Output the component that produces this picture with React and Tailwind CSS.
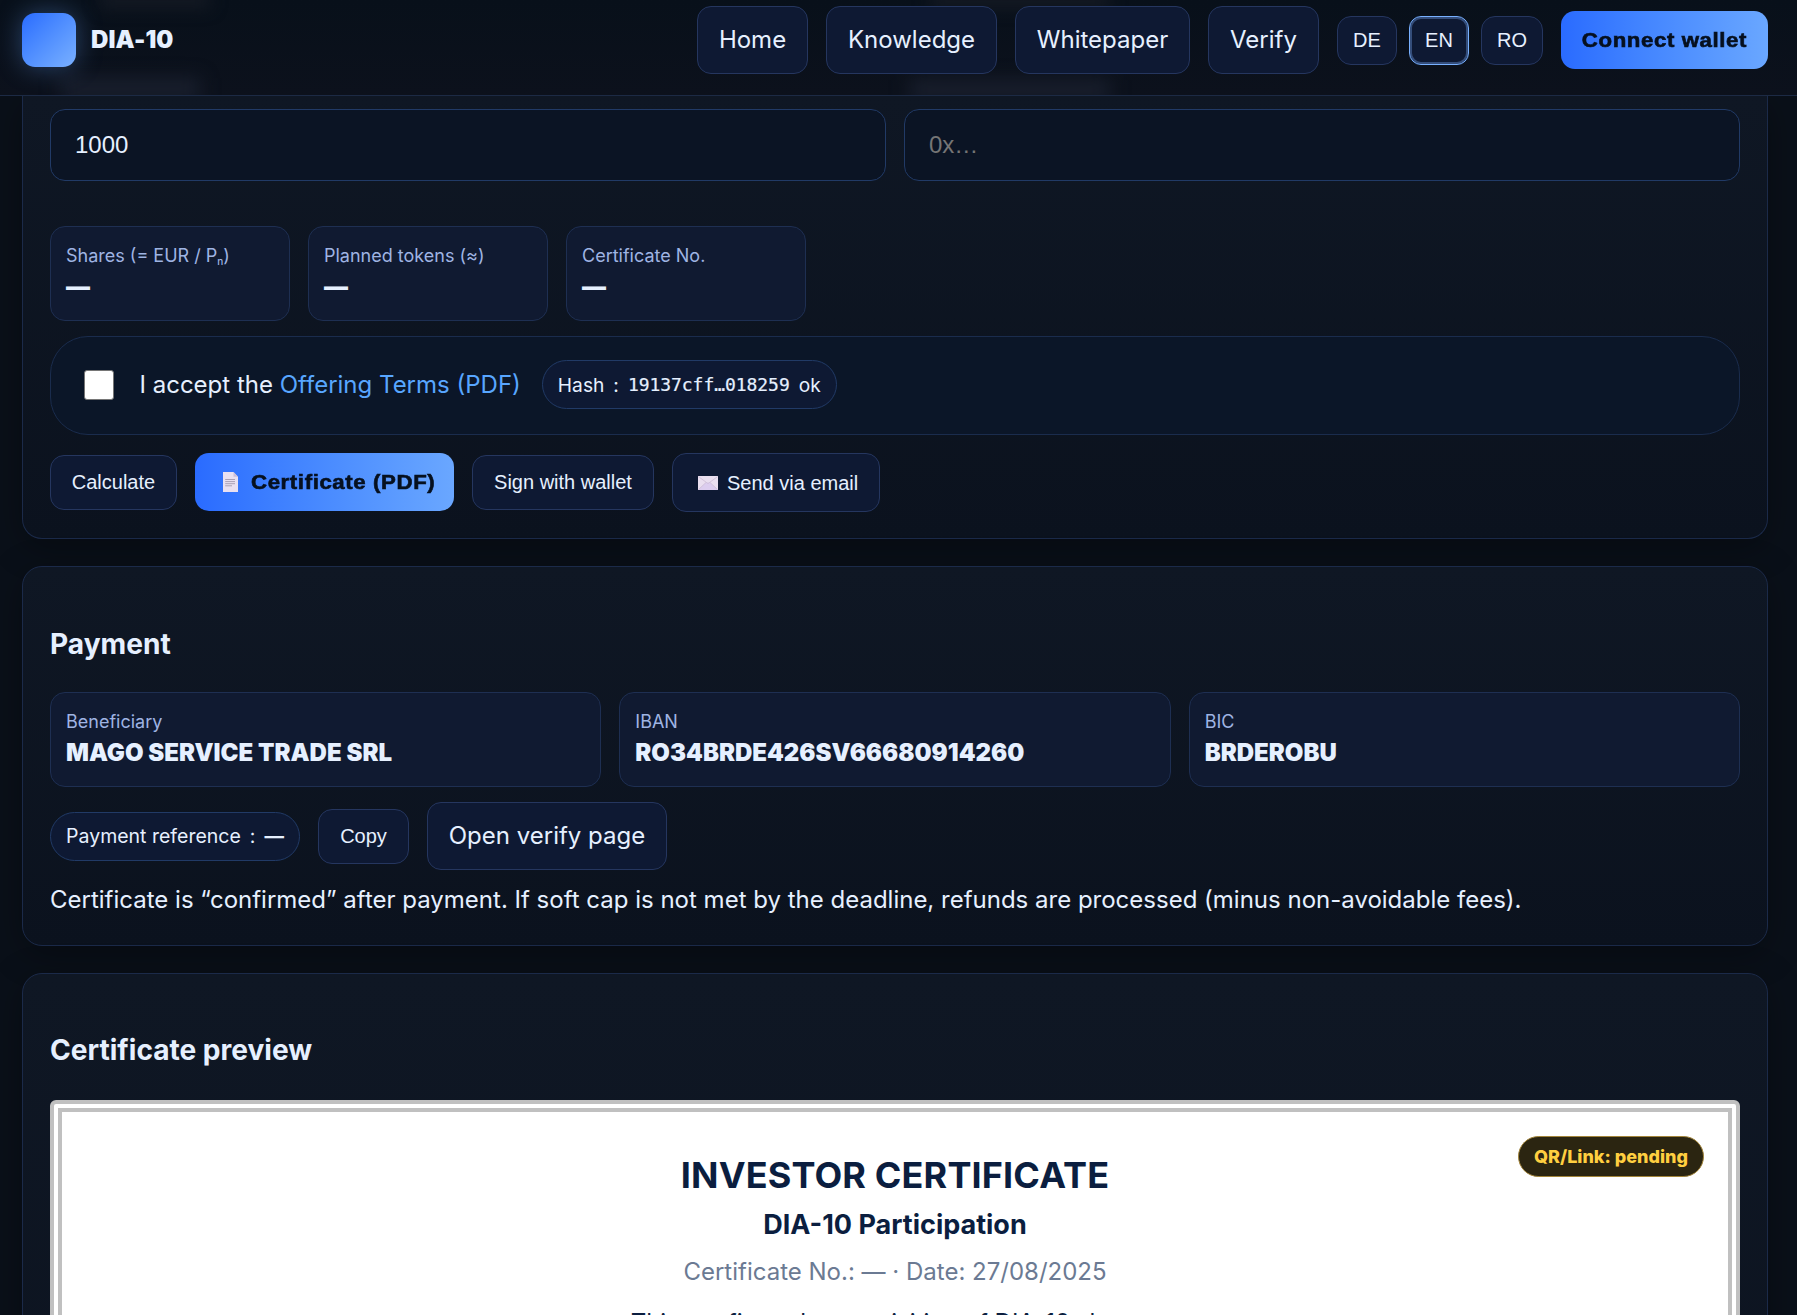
const btn = "flex items-center border border-[#25365f] bg-[#0e1933] rounded-[14px]";
const sans = "font-['Inter',sans-serif]";
const arial = "font-['Liberation_Sans',sans-serif]";
const heavy = "font-bold tracking-[0.55px] text-[#06101f] [-webkit-text-stroke:0.6px_#06101f]";

function Tile({ label, value, wide }) {
  return (
    <div className={`${wide ? "flex-1" : "w-[240px]"} h-[95px] rounded-[15px] border border-[#1e2f52] bg-[#101a31] px-[15px] pt-[15px]`}>
      <div className="h-7 text-[18px] leading-[28px] text-[#9fb4e3]">{label}</div>
      <div className="text-[24px] leading-[34px] font-black">{value}</div>
    </div>
  );
}

function DocIcon() {
  return (
    <svg viewBox="0 0 15 20" className="h-5 w-[15px] shrink-0">
      <path d="M0 0H10.5L15 4.8V20H0Z" fill="#e9e0f1" />
      <path d="M10.5 0V4.8H15Z" fill="#cbbfd8" />
      <path d="M2.2 7.5H12M2.2 9.6H12M2.2 11.7H12M2.2 13.8H9" stroke="#aaa1b6" strokeWidth="1" />
    </svg>
  );
}

function MailIcon() {
  return (
    <svg viewBox="0 0 20 14" className="h-[14px] w-5 shrink-0">
      <rect width="20" height="14" fill="#eadff0" />
      <path d="M0 14L8 6.5H12L20 14Z" fill="#dccdef" />
      <path d="M0.3 0.5L10 7.6L19.7 0.5M0.5 13.5L8 6.5M19.5 13.5L12 6.5" fill="none" stroke="#cdbdd6" strokeWidth="0.8" />
    </svg>
  );
}

const card = "mx-[22px] w-[1746px] border border-[#1b2a49] bg-linear-to-b from-[#0f1724] to-[#0b121e] px-[27px] shadow-[0_8px_36px_rgba(0,0,0,0.3)]";

export default function App() {
  return (
    <div className={`${sans} h-[1315px] w-full overflow-hidden bg-[#0a1019] text-[24px] leading-[36px] text-[#e6f0ff]`}>
      <header className="relative flex h-24 items-start overflow-hidden border-b border-[#1c2a44] bg-linear-to-b from-[#08101a] to-[#0c111c] pr-[29px] pl-[22px]">
        <div className="pointer-events-none absolute -top-2 left-[100px] h-4 w-[110px] bg-[#151a24] blur-[8px]" />
        <div className="pointer-events-none absolute -top-2 left-[930px] h-4 w-[180px] bg-[#151a24] blur-[8px]" />
        <div className="pointer-events-none absolute top-[78px] left-[60px] h-[22px] w-[140px] bg-[#191f2d] blur-[9px]" />
        <div className="pointer-events-none absolute top-[80px] left-[910px] h-5 w-[200px] bg-[#191f2d] blur-[9px]" />
        <div className="relative mt-[13px] size-[54px] rounded-[13px] bg-linear-to-br from-[#2a6bff] to-[#7ab0ff] shadow-[0_0_26px_rgba(106,167,255,0.35)]" />
        <div className="relative mt-[22px] ml-[15px] text-[24px] leading-[36px] font-black tracking-[0.1px]">DIA-10</div>
        <nav className="relative ml-auto flex h-20 items-center gap-[18px]">
          <div className={`${btn} h-[68px] w-[111px] justify-center`}>Home</div>
          <div className={`${btn} h-[68px] w-[171px] justify-center`}>Knowledge</div>
          <div className={`${btn} h-[68px] w-[175px] justify-center`}>Whitepaper</div>
          <div className={`${btn} h-[68px] w-[111px] justify-center`}>Verify</div>
          <div className={`${arial} flex gap-3 text-[20px]`}>
            <div className={`${btn} h-[49px] w-[60px] justify-center rounded-[12px]`}>DE</div>
            <div className="flex h-[49px] w-[60px] items-center justify-center rounded-[12px] border border-[#78b0ff] bg-[#0e1933] shadow-[inset_0_0_0_2px_rgba(122,176,255,0.35)]">EN</div>
            <div className={`${btn} h-[49px] w-[62px] justify-center rounded-[12px]`}>RO</div>
          </div>
          <div className={`${arial} ${heavy} flex h-[58px] w-[207px] items-center justify-center rounded-[14px] bg-linear-to-r from-[#2a6bff] to-[#6aa7ff] text-[20px] whitespace-nowrap`}>
            <span className="scale-x-[1.11]">Connect wallet</span>
          </div>
        </nav>
      </header>

      <section className={`${card} h-[443px] rounded-b-[20px] border-t-0 from-[#0e1421]`}>
        <div className={`${arial} flex gap-[18px] pt-[13px]`}>
          <div className="flex h-[72px] flex-1 items-center rounded-[15px] border border-[#213a66] bg-[#0b1424] px-6">1000</div>
          <div className="flex h-[72px] flex-1 items-center rounded-[15px] border border-[#213a66] bg-[#0b1424] px-6 text-[#757575]">0x…</div>
        </div>
        <div className="mt-[45px] flex gap-[18px]">
          <Tile label={<>Shares (= EUR / P<span className="relative top-[3px] text-[10px] leading-none font-medium">n</span>)</>} value="—" />
          <Tile label="Planned tokens (≈)" value="—" />
          <Tile label="Certificate No." value="—" />
        </div>
        <div className="mt-[15px] flex h-[99px] items-center rounded-[38px] border border-[#1a2c4d] bg-[#0b1628] pb-[2px] pl-[33px]">
          <div className="size-[30px] rounded-[3px] border-[1.5px] border-[#767676] bg-white" />
          <div className="ml-[25.5px]">I accept the <span className="text-[#58a6ff]">Offering Terms (PDF)</span></div>
          <div className="ml-[21px] flex h-[49px] w-[295px] items-center justify-center gap-[9px] rounded-full border border-[#213a66] bg-[#0e1933] text-[19.2px]">
            <span>Hash</span><span>:</span><span className="font-['DejaVu_Sans_Mono',monospace] text-[18px] tracking-[-0.05px] [-webkit-text-stroke:0.2px_#e6f0ff]">19137cff…018259</span><span>ok</span>
          </div>
        </div>
        <div className={`${arial} mt-[18px] flex h-[59px] items-start gap-[18px] text-[20px]`}>
          <div className={`${btn} mt-[2px] h-[55px] w-[127px] justify-center pb-[2px]`}>Calculate</div>
          <div className={`${heavy} flex h-[58px] w-[259px] items-center gap-[13px] rounded-[14px] bg-linear-to-r from-[#2a6bff] to-[#6aa7ff] pl-7 whitespace-nowrap`}>
            <DocIcon />
            <span className="origin-left scale-x-[1.11]">Certificate (PDF)</span>
          </div>
          <div className={`${btn} mt-[2px] h-[55px] w-[182px] justify-center pb-[2px]`}>Sign with wallet</div>
          <div className={`${btn} h-[59px] w-[208px] gap-[9px] pl-[25px]`}><MailIcon />Send via email</div>
        </div>
      </section>

      <section className={`${card} mt-[27px] h-[380px] rounded-[20px]`}>
        <h3 className="pt-[56px] text-[28.08px] leading-[42px] font-bold">Payment</h3>
        <div className="mt-[27px] flex gap-[18px]">
          <Tile wide label="Beneficiary" value="MAGO SERVICE TRADE SRL" />
          <Tile wide label="IBAN" value="RO34BRDE426SV66680914260" />
          <Tile wide label="BIC" value="BRDEROBU" />
        </div>
        <div className="mt-[15px] flex h-[68px] items-center gap-[18px]">
          <div className="flex h-[49px] w-[250px] items-center justify-center gap-[9px] rounded-full border border-[#213a66] bg-[#0e1933] text-[19.5px]">
            <span>Payment reference</span><span>:</span><span className="font-bold">—</span>
          </div>
          <div className={`${btn} ${arial} h-[55px] w-[91px] justify-center text-[20px]`}>Copy</div>
          <div className={`${btn} h-[68px] w-[240px] justify-center`}>Open verify page</div>
        </div>
        <p className="mt-[12px] whitespace-nowrap">Certificate is “confirmed” after payment. If soft cap is not met by the deadline, refunds are processed (minus non-avoidable fees).</p>
      </section>

      <section className={`${card} mt-[27px] h-[800px] rounded-[20px]`}>
        <h3 className="pt-[55px] text-[28.08px] leading-[42px] font-bold">Certificate preview</h3>
        <div className="relative mt-[29px] h-[660px] rounded-[6px] border-[12px] border-double border-[#c0c0c0] bg-white text-center text-[#0b1e3f]">
          <div className="absolute top-6 right-6 flex h-[41px] w-[186px] items-center justify-center rounded-full border border-[#a3853a] bg-[#2b2511] text-[18px] font-extrabold text-[#ffcf40]">QR/Link: pending</div>
          <h1 className="pt-[36px] text-[36px] leading-[54px] font-bold tracking-[0.15px]">INVESTOR CERTIFICATE</h1>
          <h2 className="mt-[2px] text-[27px] leading-[42px] font-bold">DIA-10 Participation</h2>
          <p className="mt-[8px] text-[#6b7a93]">Certificate No.: — · Date: 27/08/2025</p>
          <p className="mt-[15px]">This confirms the acquisition of DIA-10 shares.</p>
        </div>
      </section>
    </div>
  );
}
